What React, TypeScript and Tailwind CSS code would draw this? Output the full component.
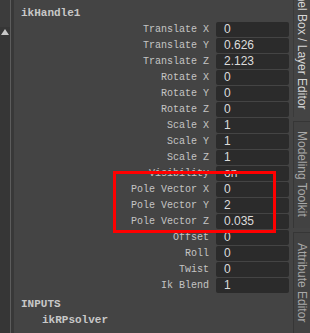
import React from "react";

const rows: [string, string][] = [
  ["Translate X", "0"],
  ["Translate Y", "0.626"],
  ["Translate Z", "2.123"],
  ["Rotate X", "0"],
  ["Rotate Y", "0"],
  ["Rotate Z", "0"],
  ["Scale X", "1"],
  ["Scale Y", "1"],
  ["Scale Z", "1"],
  ["Visibility", "on"],
  ["Pole Vector X", "0"],
  ["Pole Vector Y", "2"],
  ["Pole Vector Z", "0.035"],
  ["Offset", "0"],
  ["Roll", "0"],
  ["Twist", "0"],
  ["Ik Blend", "1"],
];

const mono = { fontFamily: '"Liberation Mono", "DejaVu Sans Mono", monospace' };
const sans = { fontFamily: '"Liberation Sans", Arial, sans-serif' };

export default function App() {
  return (
    <div className="relative flex w-[310px] h-[333px] overflow-hidden bg-[#444444]">
      {/* left strip */}
      <div className="flex flex-col w-[10px] shrink-0">
        <div className="h-[27px] bg-[#3c3c3c]" />
        <div className="flex-1 bg-[#363636] pt-[2px] pl-[1px]">
          <svg width="8" height="6" viewBox="0 0 8 6">
            <polygon points="4,0 8,6 0,6" fill="#c8c8c8" />
          </svg>
        </div>
      </div>
      <div className="w-[1px] shrink-0 bg-[#5c5c5c]" />
      <div className="w-[3px] shrink-0 bg-[#383838]" />

      {/* main */}
      <div className="flex flex-col flex-1 pt-[7px] pl-[7px] pr-[4px]">
        <div
          className="h-[15px] text-[11px] leading-[12px] font-bold text-[#c8c8c8]"
          style={mono}
        >
          ikHandle1
        </div>
        <div className="flex flex-col">
          {rows.map(([label, value]) => (
            <div key={label} className="flex items-start h-[16px]">
              <div
                className="flex-1 text-right pr-[7px] text-[10px] leading-[16px] text-[#c4c4c4]"
                style={mono}
              >
                {label}
              </div>
              <div
                className="w-[73px] h-[15px] rounded-[2px] bg-[#2b2b2b] pl-[8px] text-[12px] leading-[15px] text-[#dcdcdc]"
                style={sans}
              >
                {value}
              </div>
            </div>
          ))}
        </div>
        <div
          className="mt-[2px] h-[16px] text-[11px] leading-[16px] font-bold text-[#c8c8c8]"
          style={mono}
        >
          INPUTS
        </div>
        <div
          className="pl-[21px] h-[16px] text-[11px] leading-[16px] font-bold text-[#c8c8c8]"
          style={mono}
        >
          ikRPsolver
        </div>
      </div>

      {/* right tab strip */}
      <div className="flex flex-col w-[17px] shrink-0 gap-[4px]">
        <div className="h-[117px] bg-[#444444] overflow-hidden border-l border-[#3a3a3a] flex justify-center">
          <div
            className="[writing-mode:vertical-rl] text-[12px] leading-[16px] text-[#d6d6d6] whitespace-nowrap mt-[-34px]"
            style={sans}
          >
            Channel Box / Layer Editor
          </div>
        </div>
        <div className="h-[107px] bg-[#424242] border-l border-t border-[#363636] flex justify-center pt-[9px]">
          <div
            className="[writing-mode:vertical-rl] text-[12px] leading-[16px] text-[#a8a8a8] whitespace-nowrap"
            style={sans}
          >
            Modeling Toolkit
          </div>
        </div>
        <div className="flex-1 bg-[#424242] border-l border-t border-[#363636] flex justify-center pt-[10px]">
          <div
            className="[writing-mode:vertical-rl] text-[12px] leading-[16px] text-[#a8a8a8] whitespace-nowrap"
            style={sans}
          >
            Attribute Editor
          </div>
        </div>
      </div>

      {/* red annotation box */}
      <div className="absolute left-[113px] top-[171px] w-[163px] h-[62px] border-[3px] border-[#ff0000]" />
    </div>
  );
}
